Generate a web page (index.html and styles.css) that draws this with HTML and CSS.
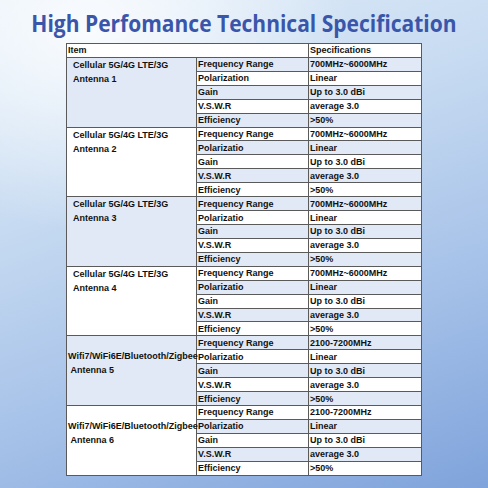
FILE: index.html
```html
<!DOCTYPE html>
<html lang="en">
<head>
    <meta charset="UTF-8">
    <meta name="viewport" content="width=device-width, initial-scale=1.0">
    <title>High Perfomance Technical Specification</title>
    <link rel="stylesheet" href="styles.css">
</head>
<body>
    <div class="sheet">
        <h1><span class="title">High Perfomance Technical Specification</span></h1>

        <table class="spec">
            <colgroup>
                <col class="c-item">
                <col class="c-param">
                <col class="c-value">
            </colgroup>
            <tr class="head">
                <td class="item-head" colspan="2">Item</td>
                <td>Specifications</td>
            </tr>

            <!-- Antenna 1 -->
            <tr class="blue">
                <td class="item blue" rowspan="5">Cellular 5G/4G LTE/3G<br>Antenna 1</td>
                <td>Frequency Range</td><td>700MHz~6000MHz</td>
            </tr>
            <tr><td>Polarization</td><td>Linear</td></tr>
            <tr class="blue"><td>Gain</td><td>Up to 3.0 dBi</td></tr>
            <tr><td>V.S.W.R</td><td>average 3.0</td></tr>
            <tr class="blue"><td>Efficiency</td><td>&gt;50%</td></tr>

            <!-- Antenna 2 -->
            <tr>
                <td class="item" rowspan="5">Cellular 5G/4G LTE/3G<br>Antenna 2</td>
                <td>Frequency Range</td><td>700MHz~6000MHz</td>
            </tr>
            <tr class="blue"><td>Polarizatio</td><td>Linear</td></tr>
            <tr><td>Gain</td><td>Up to 3.0 dBi</td></tr>
            <tr class="blue"><td>V.S.W.R</td><td>average 3.0</td></tr>
            <tr><td>Efficiency</td><td>&gt;50%</td></tr>

            <!-- Antenna 3 -->
            <tr class="blue">
                <td class="item blue" rowspan="5">Cellular 5G/4G LTE/3G<br>Antenna 3</td>
                <td>Frequency Range</td><td>700MHz~6000MHz</td>
            </tr>
            <tr><td>Polarizatio</td><td>Linear</td></tr>
            <tr class="blue"><td>Gain</td><td>Up to 3.0 dBi</td></tr>
            <tr><td>V.S.W.R</td><td>average 3.0</td></tr>
            <tr class="blue"><td>Efficiency</td><td>&gt;50%</td></tr>

            <!-- Antenna 4 -->
            <tr>
                <td class="item" rowspan="5">Cellular 5G/4G LTE/3G<br>Antenna 4</td>
                <td>Frequency Range</td><td>700MHz~6000MHz</td>
            </tr>
            <tr class="blue"><td>Polarizatio</td><td>Linear</td></tr>
            <tr><td>Gain</td><td>Up to 3.0 dBi</td></tr>
            <tr class="blue"><td>V.S.W.R</td><td>average 3.0</td></tr>
            <tr><td>Efficiency</td><td>&gt;50%</td></tr>

            <!-- Antenna 5 -->
            <tr class="blue">
                <td class="item wifi blue" rowspan="5">Wifi7/WiFi6E/Bluetooth/Zigbee<br>&nbsp;Antenna 5</td>
                <td>Frequency Range</td><td>2100-7200MHz</td>
            </tr>
            <tr><td>Polarizatio</td><td>Linear</td></tr>
            <tr class="blue"><td>Gain</td><td>Up to 3.0 dBi</td></tr>
            <tr><td>V.S.W.R</td><td>average 3.0</td></tr>
            <tr class="blue"><td>Efficiency</td><td>&gt;50%</td></tr>

            <!-- Antenna 6 -->
            <tr>
                <td class="item wifi" rowspan="5">Wifi7/WiFi6E/Bluetooth/Zigbee<br>&nbsp;Antenna 6</td>
                <td>Frequency Range</td><td>2100-7200MHz</td>
            </tr>
            <tr class="blue"><td>Polarizatio</td><td>Linear</td></tr>
            <tr><td>Gain</td><td>Up to 3.0 dBi</td></tr>
            <tr class="blue"><td>V.S.W.R</td><td>average 3.0</td></tr>
            <tr><td>Efficiency</td><td>&gt;50%</td></tr>
        </table>
    </div>
</body>
</html>
```

FILE: styles.css
```css
html, body {
    margin: 0;
    padding: 0;
}
body {
    width: 488px;
    height: 488px;
    overflow: hidden;
    font-family: 'Liberation Sans', Arial, sans-serif;
    background:
        radial-gradient(ellipse 260px 200px at 90px 30px, rgba(255,255,255,0.85), rgba(255,255,255,0) 100%),
        linear-gradient(160deg, #e2eef9 0%, #c6daf1 35%, #a4c0e8 68%, #7fa3db 100%);
}
.sheet {
    padding-top: 9px;
}
h1 {
    margin: 0 0 6px 0;
    text-align: center;
    font-family: 'Open Sans', 'Noto Sans', sans-serif;
    font-weight: 700;
    font-size: 24px;
    line-height: 28px;
    color: #3a56aa;
}
.title {
    display: inline-block;
    white-space: nowrap;
    transform: scaleX(0.875);
}
.spec {
    margin-left: 66px;
    border-collapse: collapse;
    table-layout: fixed;
    width: 355px;
    background: #fff;
    border: 1px solid #5a5a5a;
    font-size: 9px;
    font-weight: bold;
    color: #111;
}
.c-item { width: 130px; }
.c-param { width: 112px; }
.c-value { width: 113px; }
.spec td {
    height: 12.93px;
    padding: 0 0 0 1px;
    border: 1px solid #5a5a5a;
    white-space: nowrap;
    overflow: visible;
    line-height: 12px;
    vertical-align: middle;
}
.spec tr.head td {
    background: #fff;
    border-left: none;
}
.spec tr.head td.item-head {
    border-right: 1px solid #5a5a5a;
}
.spec tr.blue td {
    background: #e1e9f7;
}
.spec td.item {
    vertical-align: top;
    padding: 0 0 0 6px;
    line-height: 14px;
    background: #fff;
    border-left: none;
}
.spec td.item.blue {
    background: #e1e9f7;
}
.spec td.item.wifi {
    padding: 13px 0 0 1px;
}
```
